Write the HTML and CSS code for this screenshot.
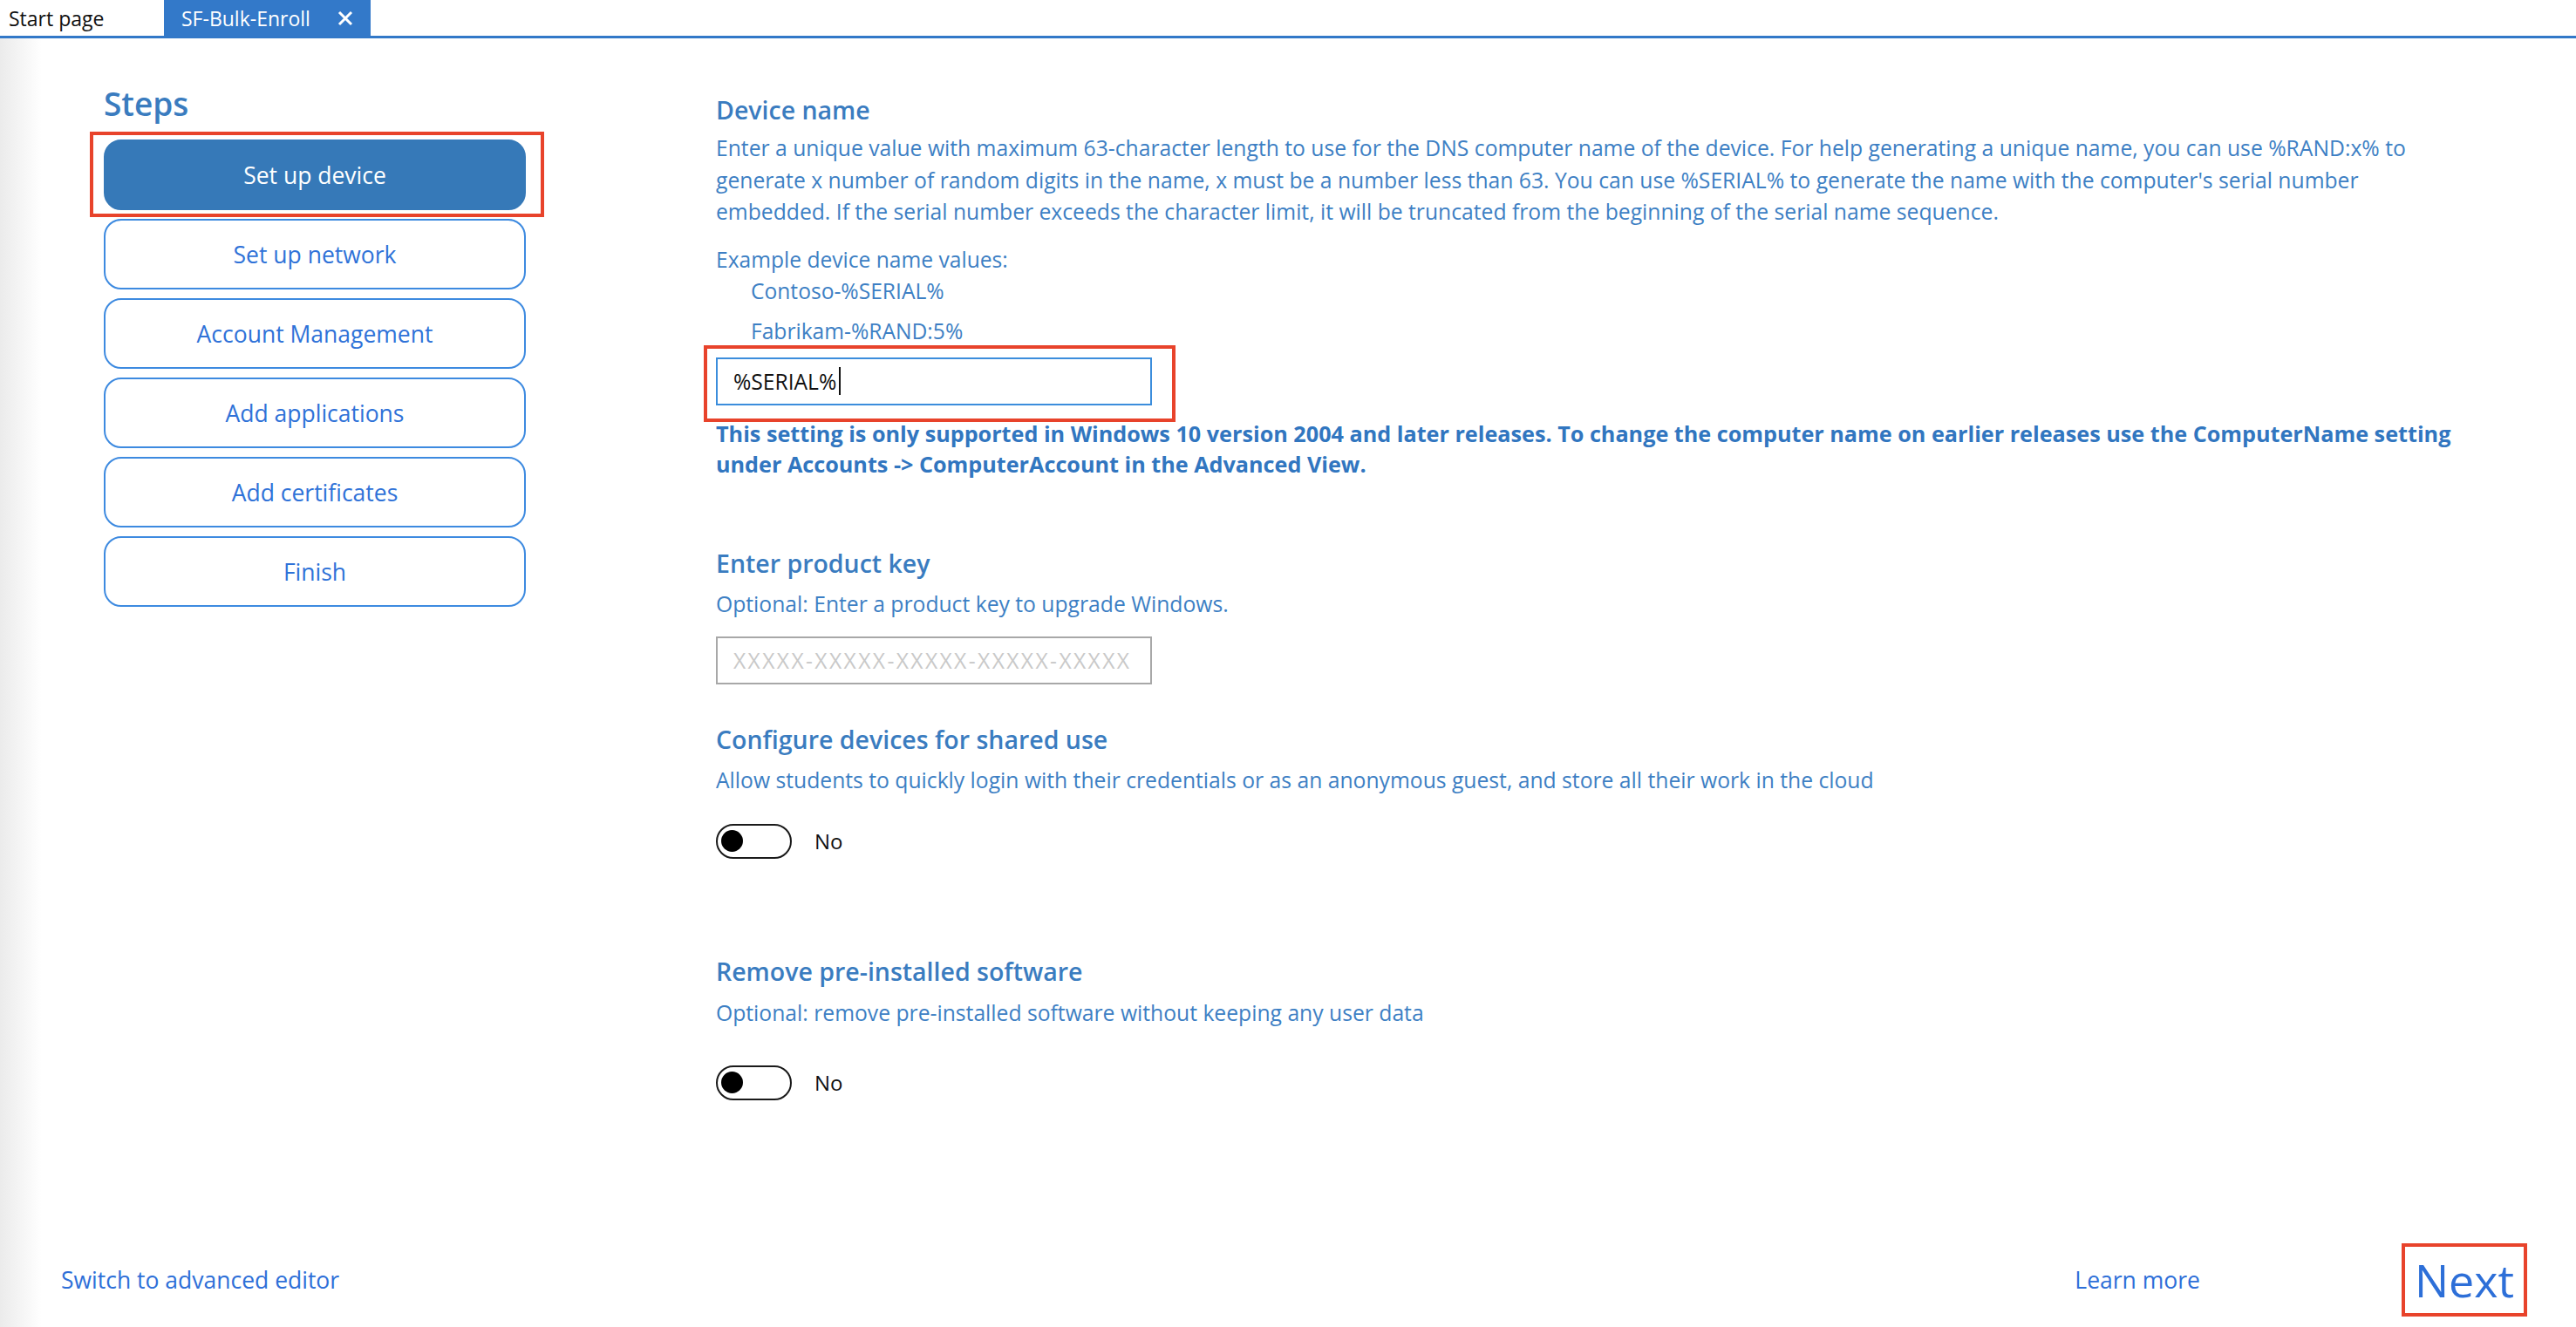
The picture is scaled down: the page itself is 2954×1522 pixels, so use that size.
FILE: index.html
```html
<!DOCTYPE html>
<html lang="en">
  <head>
    <meta charset="UTF-8" />
    <title>SF-Bulk-Enroll</title>
    <link rel="stylesheet" href="styles.css">
  </head>
  <body>
    <div class="tabs">
      <div class="tab">Start page</div>
      <div class="tab active">
        <span>SF-Bulk-Enroll</span>
        <svg class="tab-close" width="20" height="20" viewBox="0 0 20 20">
          <path d="M3 3 L17 17 M17 3 L3 17" stroke="#fff" stroke-width="3" fill="none" />
        </svg>
      </div>
    </div>

    <div class="wizard">
      <div class="steps">
        <div class="steps-title">Steps</div>
        <div class="step-list">
          <div class="step-btn current callout callout-step">Set up device</div>
          <div class="step-btn">Set up network</div>
          <div class="step-btn">Account Management</div>
          <div class="step-btn">Add applications</div>
          <div class="step-btn">Add certificates</div>
          <div class="step-btn">Finish</div>
        </div>
      </div>

      <div class="content">
        <div class="field-title">Device name</div>
        <div class="field-desc">
          Enter a unique value with maximum 63-character length to use for the DNS computer name of the device. For help generating a unique name, you can use %RAND:x% to<br>
          generate x number of random digits in the name, x must be a number less than 63. You can use %SERIAL% to generate the name with the computer's serial number<br>
          embedded. If the serial number exceeds the character limit, it will be truncated from the beginning of the serial name sequence.
        </div>
        <div class="example-label">Example device name values:</div>
        <div class="example">Contoso-%SERIAL%</div>
        <div class="example example-2">Fabrikam-%RAND:5%</div>
        <div class="text-box active-box callout callout-input">
          <span>%SERIAL%</span><span class="caret"></span>
        </div>
        <div class="note">
          This setting is only supported in Windows 10 version 2004 and later releases. To change the computer name on earlier releases use the ComputerName setting<br>
          under Accounts -&gt; ComputerAccount in the Advanced View.
        </div>

        <div class="field-title title-key">Enter product key</div>
        <div class="field-desc desc-short">Optional: Enter a product key to upgrade Windows.</div>
        <div class="text-box key-box">
          <span class="placeholder">XXXXX-XXXXX-XXXXX-XXXXX-XXXXX</span>
        </div>

        <div class="field-title title-shared">Configure devices for shared use</div>
        <div class="field-desc desc-short">Allow students to quickly login with their credentials or as an anonymous guest, and store all their work in the cloud</div>
        <div class="toggle-row toggle-first">
          <div class="toggle"><div class="knob"></div></div>
          <div class="toggle-label">No</div>
        </div>

        <div class="field-title title-remove">Remove pre-installed software</div>
        <div class="field-desc desc-short desc-remove">Optional: remove pre-installed software without keeping any user data</div>
        <div class="toggle-row toggle-second">
          <div class="toggle"><div class="knob"></div></div>
          <div class="toggle-label">No</div>
        </div>
      </div>
    </div>

    <div class="footer">
      <div class="link">Switch to advanced editor</div>
      <div class="spacer"></div>
      <div class="link learn">Learn more</div>
      <div class="next">Next</div>
    </div>
  </body>
</html>
```

FILE: styles.css
```css
body {
  margin: 0;
  height: 100vh;
  display: flex;
  flex-direction: column;
  overflow: hidden;
  font-family: "Open Sans", "Noto Sans", sans-serif;
  color: #3d7fc4;
  background: linear-gradient(to right, #ebebeb, #ffffff 48px);
}

/* tab strip */
.tabs {
  display: flex;
  height: 41px;
  border-bottom: 3px solid #3278c8;
  background: #fff;
}

.tab {
  width: 188px;
  box-sizing: border-box;
  padding-left: 10px;
  display: flex;
  align-items: center;
  font-size: 23px;
  color: #111;
}

.tab.active {
  width: 237px;
  padding-left: 20px;
  background: #3379c9;
  color: #fff;
}

.tab-close {
  margin-left: 30px;
}

/* body of the wizard */
.wizard {
  flex: 1;
  display: flex;
}

.steps {
  width: 484px;
  margin-left: 119px;
  padding-top: 52px;
}

.steps-title {
  font-size: 37px;
  line-height: 46px;
  font-weight: 600;
  color: #3a7cbf;
}

.step-list {
  margin-top: 18px;
  display: flex;
  flex-direction: column;
  gap: 10px;
}

.step-btn {
  height: 81px;
  box-sizing: border-box;
  border: 2px solid #3d8ae0;
  border-radius: 20px;
  display: flex;
  justify-content: center;
  align-items: center;
  font-size: 26.5px;
  color: #2f72d8;
  background: #fff;
}

.step-btn.current {
  background: #3679b8;
  border-color: #3679b8;
  color: #fff;
}

/* red markers drawn over the screenshot */
.callout {
  position: relative;
}

.callout::after {
  content: "";
  position: absolute;
  border: 4px solid #e8432b;
}

.callout-step::after {
  top: -11px;
  left: -18px;
  right: -23px;
  bottom: -10px;
}

.callout-input::after {
  top: -16px;
  left: -16px;
  right: -29px;
  bottom: -21px;
}

/* right column */
.content {
  margin-left: 218px;
  padding-top: 64px;
}

.field-title {
  font-size: 28.5px;
  line-height: 36px;
  font-weight: 600;
  color: #3a7cc0;
}

.field-desc {
  margin-top: 8px;
  font-size: 24.7px;
  line-height: 36.5px;
  white-space: nowrap;
}

.desc-short {
  margin-top: 11px;
  line-height: 36px;
}

.desc-remove {
  margin-top: 12px;
}

.example-label {
  margin-top: 18px;
  font-size: 24.6px;
  line-height: 36px;
}

.example {
  padding-left: 40px;
  font-size: 24.6px;
  line-height: 36px;
}

.example-2 {
  margin-top: 10px;
}

.text-box {
  width: 500px;
  height: 55px;
  box-sizing: border-box;
  display: flex;
  align-items: center;
  padding-left: 18px;
  font-size: 24.6px;
  color: #111;
}

.active-box {
  margin-top: 12px;
  border: 2px solid #3b8ddc;
}

.caret {
  width: 2px;
  height: 32px;
  margin-left: 3px;
  background: #111;
}

.key-box {
  margin-top: 19px;
  border: 2px solid #a8a8a8;
}

.placeholder {
  color: #c9c9c9;
  letter-spacing: 2.4px;
}

.note {
  margin-top: 15px;
  font-size: 25.2px;
  line-height: 35px;
  font-weight: 700;
  color: #3176c0;
  white-space: nowrap;
}

.title-key {
  margin-top: 78px;
}

.title-shared {
  margin-top: 45px;
}

.title-remove {
  margin-top: 111px;
}

.toggle-row {
  display: flex;
  align-items: center;
}

.toggle-first {
  margin-top: 32px;
}

.toggle-second {
  margin-top: 42px;
}

.toggle {
  width: 87px;
  height: 40px;
  box-sizing: border-box;
  border: 2.5px solid #1a1a1a;
  border-radius: 20px;
  display: flex;
  align-items: center;
  padding-left: 4px;
}

.knob {
  width: 25px;
  height: 25px;
  border-radius: 50%;
  background: #000;
}

.toggle-label {
  margin-left: 26px;
  font-size: 24px;
  color: #111;
}

/* bottom bar */
.footer {
  height: 92px;
  margin-bottom: 8px;
  display: flex;
  align-items: center;
  padding: 0 56px 0 70px;
}

.spacer {
  flex: 1;
}

.link {
  font-size: 26.5px;
  color: #2e6fd8;
}

.learn {
  margin-right: 231px;
}

.next {
  border: 4px solid #e8432b;
  padding: 8px 11px;
  font-size: 52px;
  line-height: 60px;
  color: #2d6fd8;
}
```
